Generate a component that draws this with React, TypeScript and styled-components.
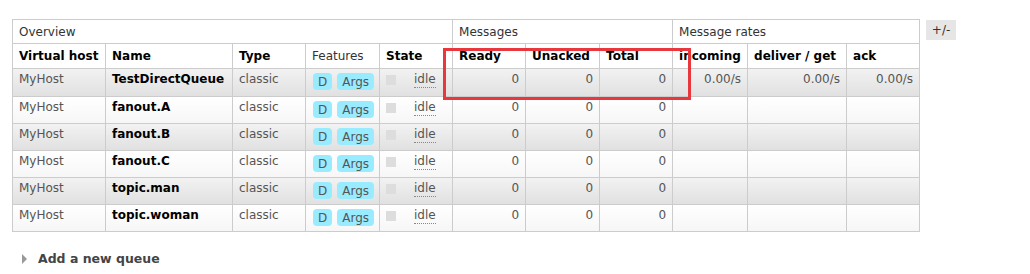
import styled, { createGlobalStyle } from "styled-components";

const GlobalStyle = createGlobalStyle`
  body {
    margin: 0;
    background: #fff;
    font-family: "DejaVu Sans", Verdana, sans-serif;
    font-size: 12px;
    color: #484848;
  }
`;

type Queue = {
  vhost: string;
  name: string;
  type: string;
  ready: number;
  unacked: number;
  total: number;
  rates?: string[];
};

const queues: Queue[] = [
  { vhost: "MyHost", name: "TestDirectQueue", type: "classic", ready: 0, unacked: 0, total: 0, rates: ["0.00/s", "0.00/s", "0.00/s"] },
  { vhost: "MyHost", name: "fanout.A", type: "classic", ready: 0, unacked: 0, total: 0 },
  { vhost: "MyHost", name: "fanout.B", type: "classic", ready: 0, unacked: 0, total: 0 },
  { vhost: "MyHost", name: "fanout.C", type: "classic", ready: 0, unacked: 0, total: 0 },
  { vhost: "MyHost", name: "topic.man", type: "classic", ready: 0, unacked: 0, total: 0 },
  { vhost: "MyHost", name: "topic.woman", type: "classic", ready: 0, unacked: 0, total: 0 },
];

const colWidths = [93, 127, 73, 74, 73, 73, 74, 73, 75, 99, 73];

const Page = styled.div`
  padding: 19px 0 0 12px;
`;

const TableRow = styled.div`
  display: flex;
  align-items: flex-start;
`;

const TableWrap = styled.div`
  position: relative;
`;

const Table = styled.table`
  border-collapse: collapse;
  table-layout: fixed;
  width: 908px;
`;

const GroupCell = styled.th`
  height: 23px;
  padding: 0 6px;
  border: 1px solid #ccc;
  text-align: left;
  font-weight: normal;
  color: #333;
  background: #fff;
`;

const HeadCell = styled.th<{ $plain?: boolean }>`
  height: 24px;
  padding: 0 6px;
  border: 1px solid #ccc;
  text-align: left;
  font-weight: ${({ $plain }) => ($plain ? "normal" : "bold")};
  color: ${({ $plain }) => ($plain ? "#333" : "#000")};
  background: #fff;
  white-space: nowrap;
`;

const DataRow = styled.tr<{ $alt: boolean; $tall?: boolean }>`
  height: ${({ $tall }) => ($tall ? "28px" : "27px")};
  background: ${({ $alt }) =>
    $alt
      ? "linear-gradient(#f2f2f2, #e0e0e0)"
      : "linear-gradient(#ffffff, #f6f6f6)"};
`;

const Cell = styled.td<{ $num?: boolean; $bold?: boolean }>`
  padding: 3px 6px 0;
  vertical-align: top;
  border: 1px solid #ccc;
  text-align: ${({ $num }) => ($num ? "right" : "left")};
  font-weight: ${({ $bold }) => ($bold ? "bold" : "normal")};
  color: ${({ $bold }) => ($bold ? "#000" : "#555")};
  white-space: nowrap;
  overflow: hidden;
`;

const Features = styled.div`
  display: flex;
  gap: 5px;
  margin: 1px 0 0 1px;
`;

const Badge = styled.span`
  display: block;
  height: 17px;
  line-height: 18px;
  padding: 0 5px;
  border-radius: 4px;
  background: #99ebff;
  color: #555;
  font-size: 12px;
`;

const StateBox = styled.div`
  display: flex;
  align-items: flex-start;
`;

const StateDot = styled.span`
  width: 10px;
  height: 10px;
  margin: 3px 18px 0 0;
  background: #ddd;
`;

const StateText = styled.abbr`
  text-decoration: none;
  border-bottom: 1px dotted #888;
  color: #555;
  line-height: 15px;
`;

const ToggleButton = styled.button`
  margin: 1px 0 0 6px;
  width: 30px;
  height: 20px;
  padding: 0;
  border: none;
  background: #e6e6e6;
  color: #333;
  font-family: "DejaVu Sans", Verdana, sans-serif;
  font-size: 12px;
`;

const Highlight = styled.div`
  position: absolute;
  left: 431px;
  top: 29px;
  width: 242px;
  height: 46px;
  border: 3px solid #e8373d;
  pointer-events: none;
`;

const AddSection = styled.div`
  display: flex;
  align-items: center;
  gap: 11px;
  margin: 19px 0 0 10px;
`;

const Arrow = styled.span`
  width: 0;
  height: 0;
  border-top: 5px solid transparent;
  border-bottom: 5px solid transparent;
  border-left: 5px solid #999;
`;

const AddTitle = styled.span`
  font-weight: bold;
  font-size: 12.5px;
  color: #444;
`;

export default function App() {
  return (
    <>
      <GlobalStyle />
      <Page>
        <TableRow>
          <TableWrap>
            <Table>
              <colgroup>
                {colWidths.map((w, i) => (
                  <col key={i} style={{ width: w }} />
                ))}
              </colgroup>
              <thead>
                <tr>
                  <GroupCell colSpan={5}>Overview</GroupCell>
                  <GroupCell colSpan={3}>Messages</GroupCell>
                  <GroupCell colSpan={3}>Message rates</GroupCell>
                </tr>
                <tr>
                  <HeadCell>Virtual host</HeadCell>
                  <HeadCell>Name</HeadCell>
                  <HeadCell>Type</HeadCell>
                  <HeadCell $plain>Features</HeadCell>
                  <HeadCell>State</HeadCell>
                  <HeadCell>Ready</HeadCell>
                  <HeadCell>Unacked</HeadCell>
                  <HeadCell>Total</HeadCell>
                  <HeadCell>incoming</HeadCell>
                  <HeadCell>deliver / get</HeadCell>
                  <HeadCell>ack</HeadCell>
                </tr>
              </thead>
              <tbody>
                {queues.map((q, i) => (
                  <DataRow key={q.name} $alt={i % 2 === 0} $tall={i === 0}>
                    <Cell>{q.vhost}</Cell>
                    <Cell $bold>{q.name}</Cell>
                    <Cell>{q.type}</Cell>
                    <Cell>
                      <Features>
                        <Badge>D</Badge>
                        <Badge>Args</Badge>
                      </Features>
                    </Cell>
                    <Cell>
                      <StateBox>
                        <StateDot />
                        <StateText>idle</StateText>
                      </StateBox>
                    </Cell>
                    <Cell $num>{q.ready}</Cell>
                    <Cell $num>{q.unacked}</Cell>
                    <Cell $num>{q.total}</Cell>
                    <Cell $num>{q.rates?.[0]}</Cell>
                    <Cell $num>{q.rates?.[1]}</Cell>
                    <Cell $num>{q.rates?.[2]}</Cell>
                  </DataRow>
                ))}
              </tbody>
            </Table>
            <Highlight />
          </TableWrap>
          <ToggleButton>+/-</ToggleButton>
        </TableRow>
        <AddSection>
          <Arrow />
          <AddTitle>Add a new queue</AddTitle>
        </AddSection>
      </Page>
    </>
  );
}
